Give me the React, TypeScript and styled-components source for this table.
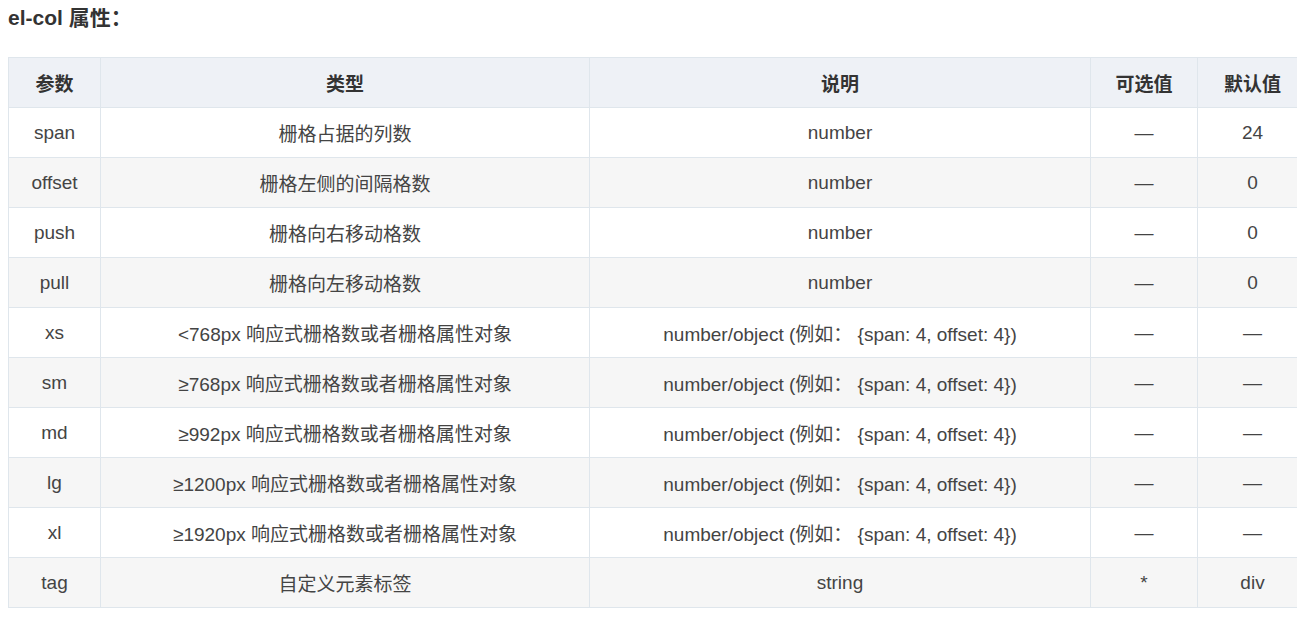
import React from "react";
import styled, { createGlobalStyle } from "styled-components";

const GlobalStyle = createGlobalStyle`
  html { overflow: hidden; }
  body {
    margin: 8px;
    background: #ffffff;
    font-family: "Liberation Sans", Arial, "Noto Sans CJK SC", sans-serif;
  }
`;

const Title = styled.h3`
  margin: 0 0 29px 0;
  font-size: 21px;
  line-height: 20px;
  font-weight: bold;
  color: #333333;
`;

const TableWrap = styled.div`
  width: calc(100% + 8px);
  overflow: hidden;
`;

const Table = styled.table`
  border-collapse: collapse;
  table-layout: fixed;
  width: 1299px;
  min-width: 1299px;
  border: 1px solid #dfe6ec;
  font-size: 19px;
`;

const HeadCell = styled.th`
  height: 49px;
  padding: 0;
  background: #eef1f6;
  border: 1px solid #dfe6ec;
  color: #333333;
  font-weight: bold;
  text-align: center;
  vertical-align: middle;
`;

const Row = styled.tr<{ $striped: boolean }>`
  background: ${(p) => (p.$striped ? "#f6f6f6" : "#ffffff")};
`;

const Cell = styled.td`
  height: 49px;
  padding: 0;
  border: 1px solid #dfe6ec;
  color: #444444;
  text-align: center;
  vertical-align: middle;
  white-space: nowrap;
`;

const widths = [92, 489, 501, 107, 110];
const headers = ["参数", "类型", "说明", "可选值", "默认值"];
const obj = "number/object (例如：\u00a0{span: 4, offset: 4})";
const rows: string[][] = [
  ["span", "栅格占据的列数", "number", "—", "24"],
  ["offset", "栅格左侧的间隔格数", "number", "—", "0"],
  ["push", "栅格向右移动格数", "number", "—", "0"],
  ["pull", "栅格向左移动格数", "number", "—", "0"],
  ["xs", "<768px 响应式栅格数或者栅格属性对象", obj, "—", "—"],
  ["sm", "≥768px 响应式栅格数或者栅格属性对象", obj, "—", "—"],
  ["md", "≥992px 响应式栅格数或者栅格属性对象", obj, "—", "—"],
  ["lg", "≥1200px 响应式栅格数或者栅格属性对象", obj, "—", "—"],
  ["xl", "≥1920px 响应式栅格数或者栅格属性对象", obj, "—", "—"],
  ["tag", "自定义元素标签", "string", "*", "div"],
];

export default function App() {
  return (
    <>
      <GlobalStyle />
      <Title>el-col 属性：</Title>
      <TableWrap>
        <Table>
          <colgroup>
            {widths.map((w, i) => (
              <col key={i} style={{ width: w }} />
            ))}
          </colgroup>
          <thead>
            <tr>
              {headers.map((h) => (
                <HeadCell key={h}>{h}</HeadCell>
              ))}
            </tr>
          </thead>
          <tbody>
            {rows.map((r, i) => (
              <Row key={r[0]} $striped={i % 2 === 1}>
                {r.map((c, j) => (
                  <Cell key={j}>{c}</Cell>
                ))}
              </Row>
            ))}
          </tbody>
        </Table>
      </TableWrap>
    </>
  );
}
